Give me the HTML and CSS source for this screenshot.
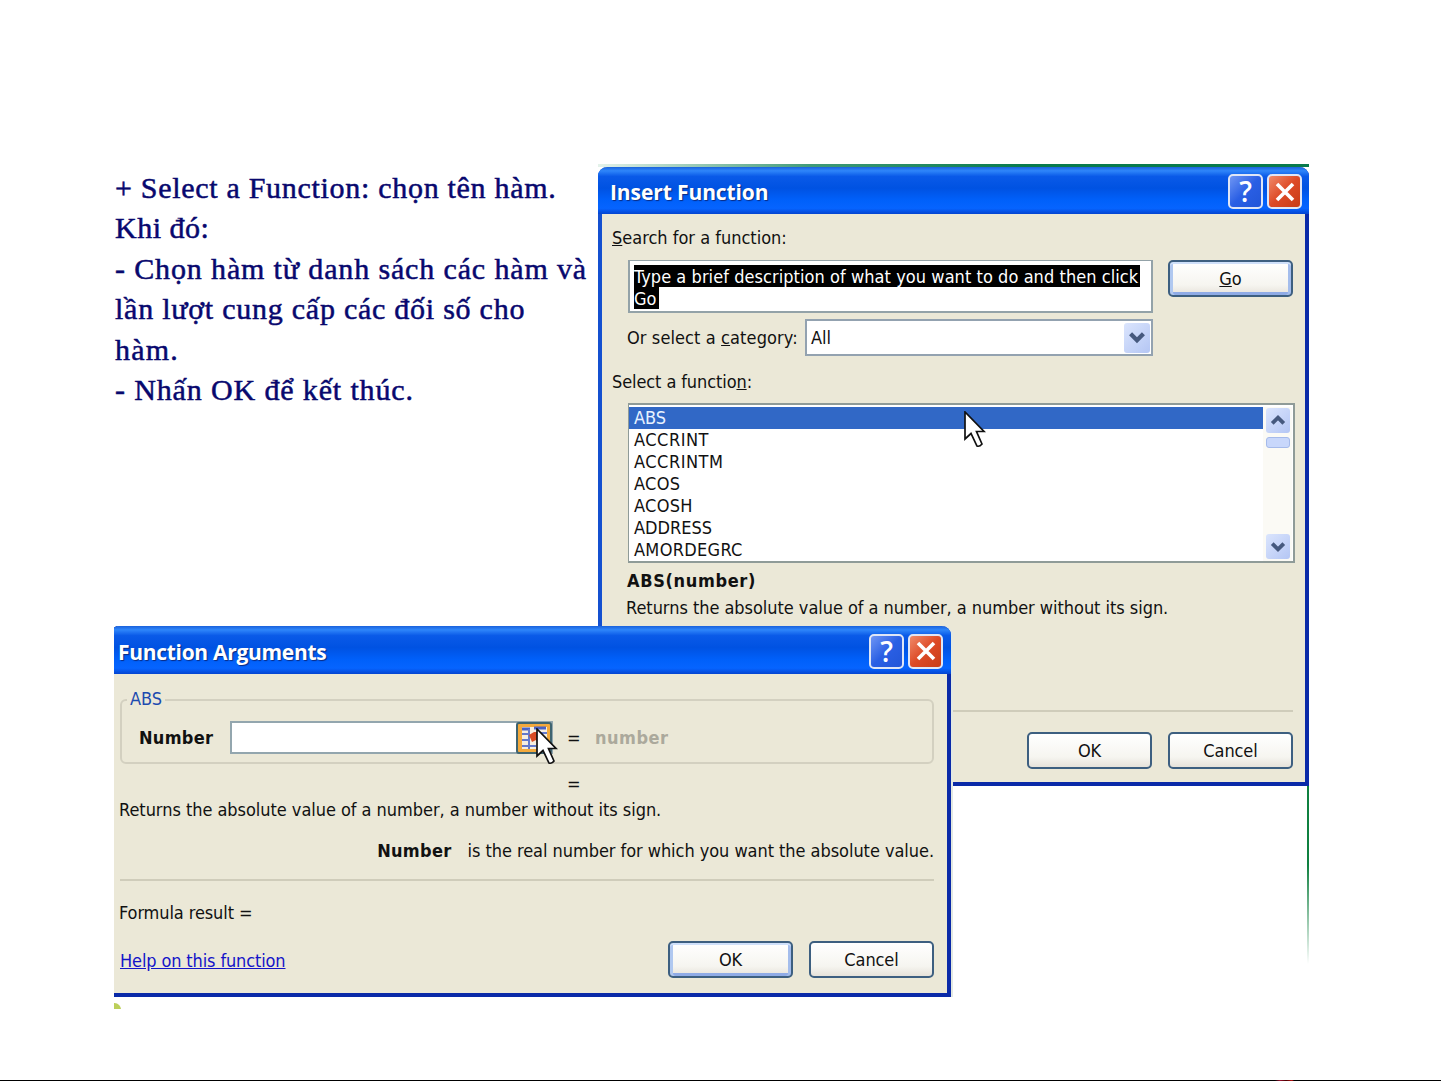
FILE: index.html
```
<!DOCTYPE html>
<html lang="vi">

<head>
    <meta charset="UTF-8">
    <meta name="viewport" content="width=device-width, initial-scale=1.0">
    <title>Insert Function</title>
    <link rel="stylesheet" href="styles.css">
</head>

<body>
    <div class="slide">
        <div class="green-top"></div>
        <div class="green-right"></div>
        <div class="leaf"></div>

        <div class="notes">
            <p class="n1">+ Select a Function: chọn tên hàm.</p>
            <p class="n2">Khi đó:</p>
            <p class="n3">- Chọn hàm từ danh sách các hàm và</p>
            <p class="n4">lần lượt cung cấp các đối số cho</p>
            <p class="n5">hàm.</p>
            <p class="n3">- Nhấn OK để kết thúc.</p>
        </div>

        <!-- Insert Function -->
        <div class="window insert">
            <div class="titlebar">
                <h2>Insert Function</h2>
                <button class="tb help">?</button>
                <button class="tb close"><svg viewBox="0 0 24 24"><path d="M4 4L20 20M20 4L4 20" /></svg></button>
            </div>
            <div class="content">
                <p class="label"><u>S</u>earch for a function:</p>
                <div class="search">
                    <div class="textarea"><span class="sel">Type a brief description of what you want to do and then click</span><br><span class="sel">Go</span></div>
                    <button class="btn default"><u>G</u>o</button>
                </div>
                <div class="category">
                    <span class="or">Or select a <u>c</u>ategory:</span>
                    <div class="select"><span>All</span>
                        <i class="arrow"><svg viewBox="0 0 24 28"><path d="M6 10L12 16L18 10" /></svg></i>
                    </div>
                </div>
                <p class="label second">Select a functio<u>n</u>:</p>
                <div class="list">
                    <ul>
                        <li class="active">ABS</li>
                        <li class="wide">ACCRINT</li>
                        <li class="wide">ACCRINTM</li>
                        <li>ACOS</li>
                        <li>ACOSH</li>
                        <li class="tight">ADDRESS</li>
                        <li>AMORDEGRC</li>
                    </ul>
                    <div class="scroll">
                        <i class="arrow"><svg viewBox="0 0 24 26"><path d="M6 16L12 10L18 16" /></svg></i>
                        <i class="thumb"></i>
                        <i class="arrow down"><svg viewBox="0 0 24 26"><path d="M6 10L12 16L18 10" /></svg></i>
                    </div>
                </div>
                <p class="syntax"><b>ABS(number)</b></p>
                <p class="desc">Returns the absolute value of a number, a number without its sign.</p>
                <hr>
                <div class="buttons">
                    <button class="btn">OK</button>
                    <button class="btn">Cancel</button>
                </div>
            </div>
            <svg class="cursor" viewBox="0 0 22 37"><path d="M1 1V28L7 22.500L13 35Q15.500 36 18 33L12.500 20.500H20Z" /></svg>
        </div>

        <!-- Function Arguments -->
        <div class="window args">
            <div class="titlebar">
                <h2>Function Arguments</h2>
                <button class="tb help">?</button>
                <button class="tb close"><svg viewBox="0 0 24 24"><path d="M4 4L20 20M20 4L4 20" /></svg></button>
            </div>
            <div class="content">
                <div class="group">
                    <span class="legend">ABS</span>
                    <b class="name">Number</b>
                    <div class="ref">
                        <svg class="picker" viewBox="0 0 36 32">
                            <rect class="frame" x="1" y="1" width="34" height="30" rx="2" />
                            <path class="sheet" d="M6 5H31V27H6Z" />
                            <path class="head" d="M6 7H14M18 6H30" />
                            <path class="cells" d="M6 12H13M23 11H31M6 18H12M6 24H20M13 7V27" />
                            <path class="red" d="M13 13L18 10H24V25L20 18L16 20Z" />
                        </svg>
                    </div>
                    <span class="eq">=</span>
                    <b class="value">number</b>
                </div>
                <p class="result">=</p>
                <p class="desc">Returns the absolute value of a number, a number without its sign.</p>
                <p class="hint"><b>Number</b><span>is the real number for which you want the absolute value.</span></p>
                <hr>
                <p class="formula">Formula result =</p>
                <div class="footer">
                    <a href="#">Help on this function</a>
                    <button class="btn default">OK</button>
                    <button class="btn">Cancel</button>
                </div>
            </div>
            <svg class="cursor" viewBox="0 0 22 37"><path d="M1 1V28L7 22.500L13 35Q15.500 36 18 33L12.500 20.500H20Z" /></svg>
        </div>
    </div>
    <div class="bottom-line"></div>
</body>

</html>
```
FILE: styles.css
```
* {
    box-sizing: border-box;
}

body {
    margin: 0;
    background-color: #fff;
    font-family: "DejaVu Sans Condensed", "DejaVu Sans", sans-serif;
    font-size: 18px;
    color: #111;
    width: 1441px;
    height: 1081px;
    overflow: hidden;
    position: relative;
}

p,
h2,
ul {
    margin: 0;
    padding: 0;
    white-space: nowrap;
}

.slide {
    position: absolute;
    left: 114px;
    top: 164px;
    width: 1195px;
    height: 845px;
    overflow: hidden;
}

/* remains of the slide frame */
.green-top {
    position: absolute;
    left: 484px;
    right: 0;
    top: 0;
    height: 3px;
    background: linear-gradient(to right, #e4f2ea, #3f9a78 30%, #087a4c 60%);
}

.green-right {
    position: absolute;
    right: 0;
    top: 620px;
    width: 2px;
    height: 180px;
    background: linear-gradient(#0f8040 45%, #fff);
}

.leaf {
    position: absolute;
    left: -6px;
    top: 839px;
    width: 13px;
    height: 13px;
    border-radius: 50%;
    background-color: #bccf5a;
}

/* notes */
.notes {
    padding: 4px 0 0 1px;
    font-family: "Liberation Serif", serif;
    font-size: 30px;
    line-height: 40.4px;
    color: #08086e;
    -webkit-text-stroke: 0.5px #08086e;
}

.notes p {
    height: 40.4px;
}

.n1 {
    letter-spacing: 0.7px;
}

.n2 {
    letter-spacing: 0.5px;
}

.n3 {
    letter-spacing: 0.86px;
}

.n4 {
    letter-spacing: 0.75px;
}

.n5 {
    letter-spacing: 1.2px;
}

/* windows */
.window {
    position: absolute;
    border: solid #0a2aa8;
    border-width: 0 4px 4px;
    border-radius: 9px 9px 0 0;
    background-color: #ebe8d7;
}

.insert {
    left: 484px;
    top: 3px;
    width: 711px;
    height: 619px;
    border-left-color: #1450d0;
}

.args {
    left: -4px;
    top: 462px;
    width: 841px;
    height: 371px;
    box-shadow: 2px 0 0 #e3e9e2;
}

.titlebar {
    display: flex;
    align-items: center;
    height: 47px;
    margin: 0 -4px;
    padding: 2px 7px 0 12px;
    border-radius: 9px 9px 0 0;
    background: linear-gradient(#1a62dc 0, #2f86fa 8%, #0a5ae8 20%, #0052e2 45%, #0060fa 70%, #0664ff 88%, #0444d0 100%);
}

.args .titlebar {
    height: 48px;
    padding-left: 8px;
}

.titlebar h2 {
    flex: 1;
    font: bold 21px/44px "Open Sans", sans-serif;
    letter-spacing: -0.1px;
    color: #fff;
    text-shadow: 1px 1px 1px #0a2a80;
}

.args .titlebar h2 {
    padding-top: 2px;
    letter-spacing: -0.3px;
}

.tb {
    width: 35px;
    height: 35px;
    margin-left: 4px;
    padding: 0;
    border: 2px solid #dfe6f6;
    border-radius: 5px;
    color: #fff;
}

.args .tb {
    position: relative;
    left: -1px;
}

.help {
    background: linear-gradient(135deg, #6f96f4, #2a5fe4 50%, #2256d8);
    font: 600 28px/31px "Open Sans", sans-serif;
}

.close {
    background: linear-gradient(135deg, #f08a6a, #dd4a26 50%, #c83c18);
}

.close svg {
    display: block;
    width: 24px;
    height: 24px;
    margin: 3px auto;
    fill: none;
    stroke: #fff;
    stroke-width: 3.600;
}

.label {
    padding-left: 10px;
    height: 46px;
    line-height: 48px;
}

/* search box */
.search {
    display: flex;
    align-items: flex-start;
    justify-content: space-between;
    padding: 0 12px 0 26px;
}

.textarea {
    width: 525px;
    height: 53px;
    padding: 4px;
    border: 2px solid #93a2a8;
    border-width: 1px 2px 2px;
    background-color: #fff;
    font-size: 18px;
    line-height: 22px;
    letter-spacing: 0.06px;
    white-space: nowrap;
}

.sel {
    display: inline-block;
    height: 22px;
    padding-right: 2px;
    background-color: #000;
    color: #fff;
    line-height: 23px;
    vertical-align: top;
}

.btn {
    width: 125px;
    height: 37px;
    padding: 0;
    border: 2px solid #3d5f80;
    border-radius: 5px;
    background: linear-gradient(#fff, #f6f5f0 70%, #e6e2da);
    font: 18px "DejaVu Sans Condensed", "DejaVu Sans", sans-serif;
    letter-spacing: -0.1px;
    color: #111;
}

.btn.default {
    box-shadow: inset 0 2px 0 #cfe0fa, inset 3px 0 0 #b0c8f0, inset -3px 0 0 #a4bdec, inset 0 -3px 0 #8fabe6;
}

.category {
    display: flex;
    align-items: center;
    height: 37px;
    margin-top: 6px;
    padding-left: 25px;
}

.or {
    letter-spacing: 0.1px;
    white-space: nowrap;
}

.select {
    display: flex;
    align-items: center;
    justify-content: space-between;
    width: 348px;
    height: 37px;
    margin-left: auto;
    margin-right: 152px;
    padding: 0 1px 0 4px;
    border: 2px solid #93a2b0;
    background-color: #fff;
}

.arrow {
    display: block;
    width: 26px;
    height: 30px;
    border-radius: 3px;
    background: linear-gradient(135deg, #dbe5fd, #b4c6f4);
}

.arrow svg {
    display: block;
    width: 100%;
    height: 100%;
    fill: none;
    stroke: #46597e;
    stroke-width: 4;
}

.label.second {
    height: 47px;
    line-height: 51px;
    letter-spacing: -0.1px;
}

/* function list */
.list {
    display: flex;
    width: 667px;
    height: 160px;
    margin-left: 26px;
    padding: 2px 1px 0 0;
    border: 2px solid #8f9b98;
    border-width: 2px 2px 2px 1px;
    background-color: #fff;
}

.list ul {
    flex: 1;
    list-style: none;
}

.list li {
    height: 22px;
    padding-left: 5px;
    line-height: 22px;
    letter-spacing: 0.3px;
}

.list .wide {
    letter-spacing: 0.5px;
}

.list .tight {
    letter-spacing: 0;
}

.list .active {
    background-color: #3168c6;
    color: #e8f2ff;
    letter-spacing: 0;
}

.scroll {
    display: flex;
    flex-direction: column;
    width: 29px;
    padding: 1px 2px 2px 3px;
    background-color: #fbfaf5;
}

.scroll .arrow {
    width: 24px;
    height: 25px;
}

.thumb {
    height: 11px;
    margin-top: 4px;
    border: 1px solid #a5baea;
    border-radius: 3px;
    background-color: #c8d7fb;
}

.scroll .down {
    margin-top: auto;
}

.syntax {
    height: 34px;
    padding-left: 25px;
    line-height: 35px;
    letter-spacing: 0.65px;
}

.desc {
    letter-spacing: -0.04px;
}

.insert .desc {
    height: 22px;
    padding-left: 24px;
    line-height: 22px;
}

hr {
    height: 2px;
    margin: 0;
    border: 0;
    background-color: #cfccba;
}

.insert hr {
    margin: 91px 12px 0 25px;
}

.buttons {
    display: flex;
    justify-content: flex-end;
    gap: 16px;
    padding: 20px 12px 0 0;
}

.cursor {
    position: absolute;
    width: 22px;
    height: 37px;
    fill: #fff;
    stroke: #111;
    stroke-width: 1.700;
}

.insert .cursor {
    left: 362px;
    top: 244px;
}

.args .cursor {
    left: 422px;
    top: 102px;
}

/* function arguments */
.args .content {
    padding: 25px 13px 0 6px;
}

.group {
    position: relative;
    display: flex;
    align-items: center;
    height: 65px;
    padding: 11px 0 0 17px;
    border: 2px solid #d3d0c0;
    border-radius: 6px;
}

.legend {
    position: absolute;
    left: 5px;
    top: -13px;
    padding: 0 3px;
    background-color: #ebe8d7;
    color: #1d4bb0;
    line-height: 22px;
}

.ref {
    display: flex;
    justify-content: flex-end;
    width: 323px;
    height: 33px;
    border: 2px solid #93a6ae;
    background-color: #fff;
}

.picker {
    width: 36px;
    height: 32px;
    margin: -1px -1px 0 0;
}

.picker path {
    fill: none;
}

.picker .frame {
    fill: #f3a93c;
    stroke: #3f6470;
    stroke-width: 2;
}

.picker .sheet {
    fill: #f6eee0;
}

.picker .head {
    stroke: #4a62c4;
    stroke-width: 3;
}

.picker .cells {
    stroke: #6479cc;
    stroke-width: 2;
}

.picker .red {
    fill: #d84a22;
}

.name {
    width: 91px;
    letter-spacing: 0.3px;
}

.eq {
    width: 14px;
    margin: 0 14px;
}

.value {
    color: #aba99c;
    letter-spacing: 0.5px;
}

.result {
    height: 41px;
    padding-left: 447px;
    line-height: 40px;
}

.args .desc {
    height: 12px;
    margin-left: -1px;
    line-height: 10px;
}

.hint {
    height: 62px;
    text-align: right;
    line-height: 67px;
    letter-spacing: -0.05px;
}

.hint b {
    margin-right: 16px;
    letter-spacing: 0.3px;
}

.formula {
    height: 60px;
    margin-left: -1px;
    line-height: 63px;
    letter-spacing: -0.1px;
}

.footer {
    display: flex;
    align-items: center;
    gap: 16px;
}

.footer a {
    margin-right: auto;
    padding-top: 2px;
    color: #1414c8;
    letter-spacing: -0.13px;
}

.bottom-line {
    position: absolute;
    left: 0;
    right: 0;
    bottom: 0;
    height: 1px;
    background: linear-gradient(to right, #000 1275px, #a01030 1280px, #400 1286px, #c01010 1292px, #000 1294px);
}
```
